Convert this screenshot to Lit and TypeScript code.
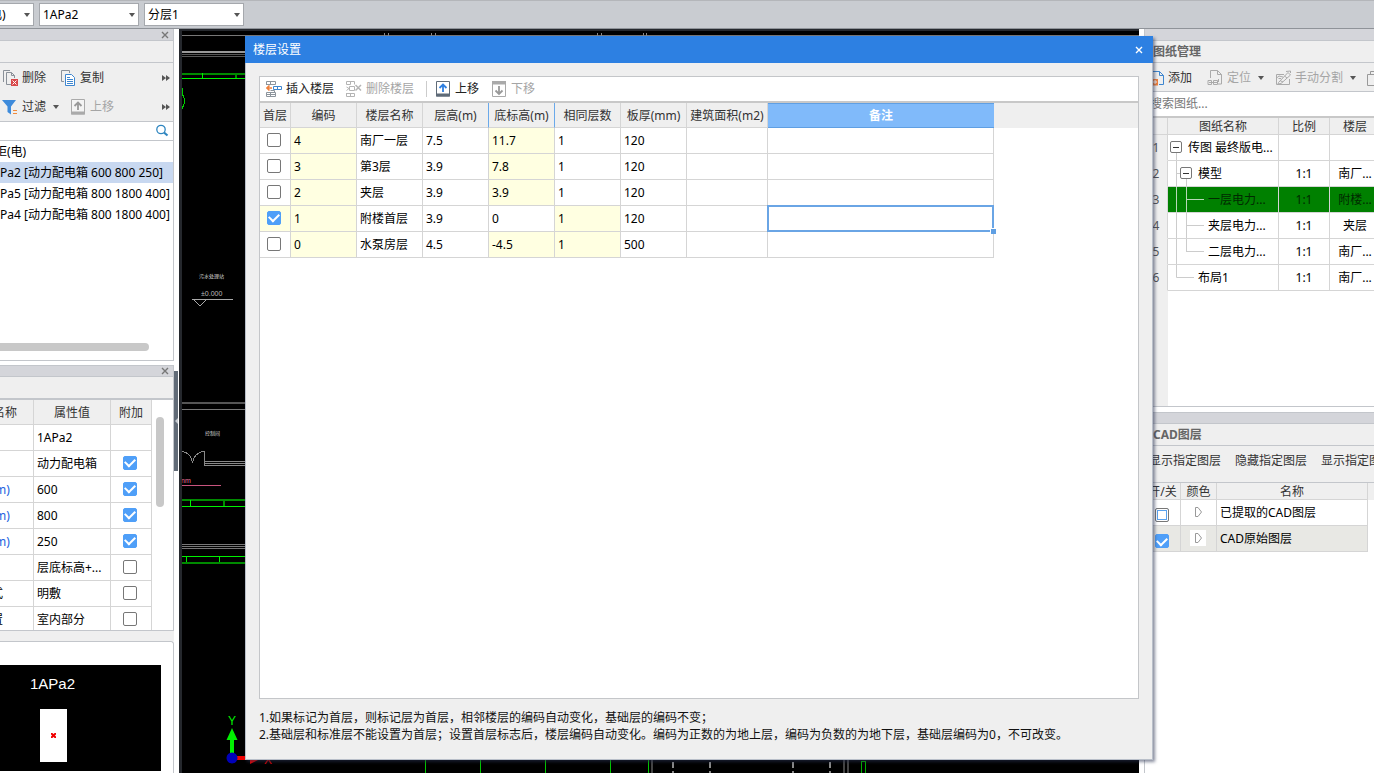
import { LitElement, html, svg, css, nothing } from "lit";
import { customElement, state } from "lit/decorators.js";

interface Floor {
  first: boolean;
  code: string;
  name: string;
  height: string;
  base: string;
  same: string;
  slab: string;
}

const icons = {
  close: html`<svg class="ico-s" viewBox="0 0 8 8"><path d="M1 1L7 7M7 1L1 7" stroke="currentColor" stroke-width="1.4" fill="none"/></svg>`,
  caret: html`<svg class="caret" viewBox="0 0 6 4"><path d="M0 0H6L3 4Z" fill="#555"/></svg>`,
  more: html`<svg class="ico-s" viewBox="0 0 8 8"><path d="M0 1L4 4L0 7ZM4 1L8 4L4 7Z" fill="#555"/></svg>`,
  del: html`<svg class="ico" viewBox="0 0 16 16" fill="none"><path d="M1.500 12V.5H8M10 14.500H4.500V2.500H9.500L12.500 5.500V8" stroke="#8a9199"/><path d="M9.500 2.500V5.500H12.500" stroke="#8a9199"/><rect x="9" y="9" width="7" height="7" fill="#d9484a"/><path d="M10.500 10.500L14.500 14.500M14.500 10.500L10.500 14.500" stroke="#fff"/></svg>`,
  copy: html`<svg class="ico" viewBox="0 0 16 16" fill="none"><path d="M4 11.500H1.500V.5H9.500V3" stroke="#8a9199"/><path d="M5.500 4.500H11.500L14.500 7.500V15.500H5.500Z" stroke="#3e86cf" fill="#fff"/><path d="M7 7.500H10M7 9.500H13M7 11.500H13M7 13.500H13" stroke="#3e86cf"/></svg>`,
  filter: html`<svg class="ico" viewBox="0 0 16 16"><path d="M0 1H14L9 7.500V15.500L5.500 13V7.500Z" fill="#3e8bdb"/><path d="M11 11.500H15M11 14.500H15" stroke="#f08a3c"/></svg>`,
  upGray: html`<svg class="ico" viewBox="0 0 16 16"><path d="M1.500 .500H14.500V15H1.500Z" fill="#f4f4f4" stroke="#aaa"/><path d="M1 12.500H15V15.500H1Z" fill="#aaa"/><path d="M8 11V4M4.500 7L8 3.500L11.500 7" fill="none" stroke="#999" stroke-width="1.8"/></svg>`,
  up: html`<svg class="ico" viewBox="0 0 16 16"><path d="M1.500 .500H14.500V15H1.500Z" fill="#fff" stroke="#5f6b78"/><path d="M1 12.500H15V15.500H1Z" fill="#5f6b78"/><path d="M8 11V4M4.500 7L8 3.500L11.500 7" fill="none" stroke="#2f7fe0" stroke-width="1.8"/></svg>`,
  down: html`<svg class="ico" viewBox="0 0 16 16"><path d="M1.500 .500H14.500V15.500H1.500Z" fill="#fff" stroke="#aaa"/><path d="M1 0H15V3.500H1Z" fill="#aaa"/><path d="M8 5V12.500M4.500 9.500L8 13L11.500 9.500" fill="none" stroke="#999" stroke-width="1.8"/></svg>`,
  insert: html`<svg class="ico" viewBox="0 0 16 16" fill="none"><path d="M.5 4V.5H9.500V3.500H.5M4.500 .500V3.500M.5 12V15.500H9.500V11.500H.5V13.500H9.500M4.500 11.500V15.500M4.500 9.500H8.500V11.500" stroke="#8c949c"/><path d="M7.500 5.500H15.500V8.500H7.500ZM11.500 5.500V8.500" stroke="#3e86cf"/><path d="M6 7H1M3.500 4.500L1 7L3.500 9.500" stroke="#f0803c" stroke-width="1.6"/></svg>`,
  remove: html`<svg class="ico" viewBox="0 0 16 16" fill="none" stroke="#b4b4b4"><path d="M.5 3.500V.5H8.500V3.500M4.500 .500V3.500H.5M.5 12V15.500H8.500V12.500H.5M4.500 12.500V15.500M.5 6L3 7.500L.5 9.500M3.500 5.500H8.500V9.500H3.500Z"/><path d="M9.500 4L15 9.500M15 4L9.500 9.500" stroke-width="1.5"/></svg>`,
  add: html`<svg class="ico" viewBox="0 0 16 16" fill="none"><path d="M4.500 7V1.500H11.500L15.500 5.500V14.500H11M11.500 1.500V5.500H15.500" stroke="#3e86cf"/><path d="M4 9H10V15.500H4Z" fill="#f0803c"/><path d="M7 10V14M5 12H9" stroke="#fff"/></svg>`,
  locate: html`<svg class="ico" viewBox="0 0 16 16" fill="none" stroke="#aaa"><path d="M3.500 8V.5H10.500L14.500 4.500V14H11M10.500 .500V4.500H14.500M11.500 9V12M1 10.500H4.500V14.500H1ZM6.500 10.500H10.500V14.500H6.500ZM2 12.500H10"/></svg>`,
  split: html`<svg class="ico" viewBox="0 0 16 16" fill="none" stroke="#aaa"><path d="M9 4.500H1.500V14.500H14.500V9M1 8.500L4 6L8 7M3.500 12.500L13 2.500L15.500 5L6 13.500L3 14ZM5 10.500L8 12M9.500 6L12 8M3.500 8.500H6M11 1.500L15.500 1V3"/></svg>`,
  sheets: html`<svg class="ico" viewBox="0 0 16 16" fill="none" stroke="#999"><path d="M.5 4.500H11.500V15.500H.5ZM3.500 4V1.500H15V12"/></svg>`,
  search: html`<svg class="ico" viewBox="0 0 16 16" fill="none" stroke="#2f86c0"><circle cx="7" cy="6.500" r="4.200" stroke-width="1.300"/><path d="M10 9.500L13.500 12.500" stroke-width="2.200"/></svg>`,
  tag: html`<svg class="tag" viewBox="0 0 16 16" fill="none"><path d="M5.500 3.500H8L11.500 8L8 12.500H5.500Z" stroke="#999"/></svg>`,
};

const shared = css`
  * { box-sizing: border-box; }
  button, input, select { font: inherit; color: inherit; margin: 0; }
  button { background: none; border: 0; padding: 0; display: flex; align-items: center; gap: 4px; white-space: nowrap; }
  button:disabled { color: #a5a5a5; }
  svg { display: block; flex: none; }
  .ico { width: 16px; height: 16px; }
  .ico-s { width: 8px; height: 8px; }
  .caret { width: 6px; height: 4px; }
  .tag { width: 16px; height: 16px; background: #fff; margin: 0 auto; }
  table { border-collapse: separate; border-spacing: 0; table-layout: fixed; }
  th, td { padding: 0 3px; height: 26px; border-right: 1px solid #d5d5d5; border-bottom: 1px solid #d5d5d5; overflow: hidden; white-space: nowrap; text-align: left; font-weight: 400; line-height: 16px; }
  th { background: #efefef; color: #333; text-align: center; padding: 2px 0 0; line-height: 14px; }
  .mid { text-align: center; }
  .tick { padding: 0 4px 2px 2px; }
  input[type="checkbox"] { appearance: none; width: 14px; height: 14px; margin: 0 auto; border: 1px solid #777; border-radius: 2px; background: #fff; display: grid; place-items: center; }
  input[type="checkbox"]:checked { background: #4f9ff8; border-color: #4f9ff8; }
  input[type="checkbox"]:checked::after { content: ""; width: 8px; height: 5px; border: solid #fff; border-width: 0 0 2px 2px; transform: translateY(-1px) rotate(-45deg); }
`;

@customElement("cad-canvas")
class CadCanvas extends LitElement {
  static styles = css`
    :host { display: block; background: #000; border: solid #25282d; border-width: 2px 0 0 3px; overflow: hidden; }
    svg { display: block; width: 100%; height: 100%; }
    .cad { font-family: "Noto Sans CJK SC", sans-serif; font-size: 5px; fill: #ddd; }
    .num { font-family: "Liberation Sans", sans-serif; font-size: 7px; fill: #bbb; }
    .axis { font-family: "Liberation Sans", sans-serif; font-size: 12px; }
    .pink { fill: #e8709a; }
  `;
  render() {
    const ticks = [384, 388, 431, 435, 597, 601, 643, 646];
    const green = [425, 480, 545, 610, 648];
    return html`<svg>
      <g transform="translate(-182 -31)" fill="none" shape-rendering="crispEdges">
        <path d="M182 35.500H1200" stroke="#777"/>
        <path d="M182 51.500H245" stroke="#999" stroke-width="2"/>
        <path d="M182 54.500H245M182 56.500H245" stroke="#555"/>
        <path d="M182 73.500H245M235.500 73V78" stroke="#008a00" stroke-width="2"/>
        <path d="M182 78.500H245M202.500 73V78" stroke="#00f000"/>
        ${ticks.map((x) => svg`<path d=${`M${x}.500 33V36`} stroke="#888"/>`)}
        <path d="M182 88V93L184 98V104L182 109" stroke="#00d000"/>
        <path d="M192 299.500H233M194 300L200 306L206 300" stroke="#aaa"/>
        <path d="M182 403H245" stroke="#555" stroke-width="2"/>
        <path d="M182 409.500H245" stroke="#777"/>
        <path d="M204.500 451V465M182 451Q192 454 192.500 463Q194 453 204 451M204 461.500H245M204 463.500H245M204 465.500H245" stroke="#888"/>
        <path d="M182 485.500H221" stroke="#c8547e"/>
        <path d="M182 500H245M223.500 500V506" stroke="#008a00" stroke-width="2"/>
        <path d="M182 506.500H245M190.500 500V506" stroke="#00f000"/>
        <path d="M182 544.500H245M182 546.500H245M182 548.500H245" stroke="#777"/>
        <path d="M182 556.500H245M186.500 556V563M219.500 556V563" stroke="#00f000"/>
        <path d="M182 563H245" stroke="#008a00" stroke-width="2"/>
        ${green.map((x) => svg`<path d=${`M${x}.500 758V900`} stroke="#00c800"/>`)}
        <path d="M652 758V900M844 758V900M848 758V900" stroke="#444" stroke-width="2"/>
        <path d="M673 762V900M710 762V900M793 762V900M830 762V900" stroke="#888" stroke-width="2" stroke-dasharray="6 3"/>
        <path d="M861.500 900V761.500H865.500V900" stroke="#00b000"/>
      </g>
      <g transform="translate(-182 -31)">
        <text class="cad" x="199" y="278">污水处理站</text>
        <text class="num" x="201" y="296">±0.000</text>
        <text class="cad" x="205" y="435">控制间</text>
        <text class="num pink" x="181" y="483">nm</text>
        <text class="axis" x="228" y="725" fill="#00f000">Y</text>
        <path d="M232 728L237.500 740H234V753H230V740H226.500Z" fill="#00f000"/>
        <path d="M237 756H250V752L262 758L250 764V760H237Z" fill="#f00000"/>
        <text class="axis" x="264" y="764" fill="#e00000">X</text>
        <circle cx="232" cy="758" r="5.500" fill="#0000b8"/>
      </g>
    </svg>`;
  }
}

@customElement("component-panel")
class ComponentPanel extends LitElement {
  static styles = [
    shared,
    css`
      :host { display: flex; flex-direction: column; background: #fff; overflow: hidden; }
      .panel { display: flex; flex-direction: column; background: #efefef; border: 1px solid #c3c6cb; border-left: 0; }
      .list-panel { height: 332px; flex: none; margin-bottom: 4px; border-top: 0; }
      .strip { height: 12px; flex: none; background: #d4d5da; border-bottom: 1px solid #c3c6cb; display: flex; justify-content: flex-end; align-items: center; padding-right: 4px; color: #777; }
      .blank { height: 22px; flex: none; border-bottom: 1px solid #c3c6cb; }
      .tools { height: 59px; flex: none; display: flex; flex-direction: column; justify-content: space-around; border-bottom: 1px solid #c3c6cb; color: #333; }
      .bar { display: flex; align-items: center; padding: 0 3px 0 2px; gap: 14px; }
      .bar .wide { gap: 7px; }
      .funnel { gap: 11px; }
      .wide span { display: flex; align-items: center; gap: 4px; }
      .bar .end { margin-left: auto; }
      .search { height: 19px; flex: none; background: #fff; display: flex; align-items: center; padding-right: 3px; border-bottom: 1px solid #c3c6cb; }
      .search input { border: 0; outline: 0; min-width: 0; flex: 1; height: 17px; padding: 0; }
      .tree { flex: 1; background: #fff; display: flex; flex-direction: column; white-space: nowrap; }
      .node { height: 21px; line-height: 21px; overflow: hidden; }
      .root { text-indent: -5px; }
      .on { background: #c8d8f0; }
      .hbar { height: 8px; width: 149px; border-radius: 0 4px 4px 0; background: #c8c8c8; margin-top: auto; margin-bottom: 9px; }
      .props { height: 266px; flex: none; }
      .props .strip { height: 11px; }
      .props .blank { height: 23px; border-bottom-width: 2px; }
      .grid { flex: 1; background: #fff; display: flex; overflow: hidden; min-height: 0; }
      .grid table { width: 152px; flex: none; }
      .grid th { height: 25px; }
      .c1 { width: 34px; } .c2 { width: 77px; } .c3 { width: 41px; }
      .unit { color: #1a5fe0; padding: 0; text-indent: -5px; }
      .lab { padding: 0; text-indent: -9px; }
      .grid .name { text-align: left; text-indent: -7px; }
      .vbar { width: 8px; height: 90px; border-radius: 4px; background: #c8c8c8; margin: 17px 0 0 4px; }
      .gap { height: 10px; flex: none; background: #efefef; }
      .preview { flex: 1; background: #fff; border: 1px solid #c3c6cb; border-width: 1px 1px 0 0; border-radius: 0 3px 0 0; padding: 23px 12px 0 0; }
      .sketch { background: #000; color: #fff; height: 106px; padding: 9px 0 0 30px; font: 15px/20px "Liberation Sans", sans-serif; }
      .box { width: 27px; height: 53px; background: #fff; margin: 15px 0 0 10px; display: grid; place-items: center; }
      .mark { width: 5px; height: 5px; }
    `,
  ];
  render() {
    const rows: [string, string, boolean | null, string][] = [
      ["", "1APa2", null, "lab"],
      ["", "动力配电箱", true, "lab"],
      ["m)", "600", true, "unit"],
      ["m)", "800", true, "unit"],
      ["m)", "250", true, "unit"],
      ["", "层底标高+...", false, "lab"],
      ["式", "明敷", false, "lab"],
      ["置", "室内部分", false, "lab"],
    ];
    return html`
      <section class="panel list-panel">
        <div class="strip">${icons.close}</div>
        <div class="blank"></div>
        <div class="tools">
          <div class="bar"><button>${icons.del}删除</button><button>${icons.copy}复制</button><button class="end" aria-label="更多">${icons.more}</button></div>
          <div class="bar funnel"><button class="wide"><span>${icons.filter}过滤</span>${icons.caret}</button><button disabled>${icons.upGray}上移</button><button class="end" aria-label="更多">${icons.more}</button></div>
        </div>
        <label class="search"><input type="text" aria-label="搜索构件" />${icons.search}</label>
        <div class="tree">
          <div class="node root">柜(电)</div>
          <div class="node on">Pa2 [动力配电箱 600 800 250]</div>
          <div class="node">Pa5 [动力配电箱 800 1800 400]</div>
          <div class="node">Pa4 [动力配电箱 800 1800 400]</div>
          <div class="hbar"></div>
        </div>
      </section>
      <section class="panel props">
        <div class="strip">${icons.close}</div>
        <div class="blank"></div>
        <div class="grid">
          <table>
            <thead><tr><th class="c1 name">名称</th><th class="c2">属性值</th><th class="c3">附加</th></tr></thead>
            <tbody>
              ${rows.map(([a, b, c, k]) => html`<tr><td class=${k}>${a}</td><td>${b}</td>
                <td class="tick">${c === null ? nothing : html`<input type="checkbox" aria-label=${b} .checked=${c} />`}</td></tr>`)}
            </tbody>
          </table>
          <div class="vbar"></div>
        </div>
      </section>
      <div class="gap"></div>
      <section class="preview">
        <div class="sketch">1APa2
          <div class="box"><svg class="mark" viewBox="0 0 5 5"><path d="M0 0L5 5M5 0L0 5" stroke="#f00000" stroke-width="2"/></svg></div>
        </div>
      </section>
    `;
  }
}

@customElement("drawing-panel")
class DrawingPanel extends LitElement {
  static styles = [
    shared,
    css`
      :host { display: flex; flex-direction: column; background: #fff; overflow: hidden; }
      .panel { display: flex; flex-direction: column; background: #efefef; border-left: 1px solid #c3c6cb; overflow: hidden; }
      .top { height: 378px; flex: none; border-bottom: 1px solid #c3c6cb; margin-bottom: 5px; }
      .bottom { flex: 1; border-top: 1px solid #c3c6cb; background: #fff; }
      .strip { height: 12px; flex: none; background: #d4d5da; border-bottom: 1px solid #c3c6cb; }
      .bottom .strip { height: 11px; }
      h2 { margin: 0; height: 22px; flex: none; padding-left: 8px; font-size: 12px; line-height: 21px; color: #666; background: #efefef; border-bottom: 1px solid #c3c6cb; }
      .bar { display: flex; flex: none; align-items: center; height: 29px; padding: 1px 0 0 3px; color: #333; border-bottom: 1px solid #c3c6cb; gap: 15px; background: #efefef; overflow: hidden; }
      .split { display: flex; gap: 11px; }
      .wide { gap: 7px; }
      .wide span { display: flex; align-items: center; gap: 4px; }
      .search { height: 26px; flex: none; background: #fff; border: 0; border-bottom: 2px solid #c8c8c8; padding: 0 0 2px 5px; outline: 0; border-radius: 0; }
      .search::placeholder { color: #777; opacity: 1; }
      .body { flex: 1; background: linear-gradient(to right, #efefef 23px, #fff 23px); }
      .body table { width: 236px; }
      .body th { height: 17px; }
      .body .num { height: 26px; color: #555; background: #efefef; border-bottom-color: #efefef; }
      .d0 { width: 23px; } .d1 { width: 111px; } .d2 { width: 51px; } .d3 { width: 51px; }
      .name { display: flex; align-items: center; height: 25px; }
      .body .cell { padding: 0; }
      .green td:not(.num) { background: #008000; color: #002a00; border-right-color: #d5d5d5; }
      .bottom .bar { height: 37px; gap: 14px; padding: 0 0 6px 4px; }
      .layers { background: linear-gradient(#efefef 17px, #fff 17px); flex: 1; }
      .layers table { width: 223px; }
      .layers th { height: 17px; }
      .l0 { width: 36px; } .l1 { width: 36px; } .l2 { width: 151px; }
      .grayrow td { background: #e8e8e4; }
      .low { padding: 5px 4px 0 2px; }
      .partial { box-shadow: inset 0 0 0 1px #fff, inset 0 0 0 2px #5aa2ee; }
    `,
  ];
  private guide(level: number, last: boolean, green: boolean) {
    const line = "#ccc";
    const box = (x: number) => svg`<rect x=${x + 0.5} y="6.500" width="11" height="11" rx="1.500" fill="#fff" stroke="#777"/><path d=${`M${x + 3} 12.500H${x + 9}`} stroke="#333"/>`;
    const w = level === 0 ? 20 : level === 2 ? 40 : 30;
    return html`<svg width=${w} height="25" viewBox="0 0 ${w} 25" fill="none">
      ${level === 0 ? svg`<path d="M8.500 18V25" stroke=${line}/>${box(2)}` : nothing}
      ${level === 1 ? svg`<path d="M8.500 0V25M8 12.500H12M18.500 18V25" stroke=${line}/>${box(12)}` : nothing}
      ${level === 2 ? svg`<path d=${`M8.500 0V25M18.500 0V${last ? 13 : 25}M18 12.500H36`} stroke=${green ? "#b8d8b8" : line}/>` : nothing}
      ${level === 3 ? svg`<path d="M8.500 0V12.500H26" stroke=${line}/>` : nothing}
    </svg>`;
  }
  render() {
    const rows: [string, number, string, string, boolean][] = [
      ["传图 最终版电...", 0, "", "", false],
      ["模型", 1, "1:1", "南厂...", false],
      ["一层电力...", 2, "1:1", "附楼...", false],
      ["夹层电力...", 2, "1:1", "夹层", false],
      ["二层电力...", 2, "1:1", "南厂...", true],
      ["布局1", 3, "1:1", "南厂...", false],
    ];
    return html`
      <section class="panel top">
        <div class="strip"></div>
        <h2>图纸管理</h2>
        <div class="bar">
          <button>${icons.add}添加</button>
          <div class="split">
            <button class="wide" disabled><span>${icons.locate}定位</span>${icons.caret}</button>
            <button class="wide" disabled><span>${icons.split}手动分割</span>${icons.caret}</button>
            <button disabled aria-label="图纸">${icons.sheets}</button>
          </div>
        </div>
        <input class="search" type="text" placeholder="搜索图纸..." aria-label="搜索图纸" />
        <div class="body">
          <table>
            <thead><tr><th class="d0"></th><th class="d1">图纸名称</th><th class="d2">比例</th><th class="d3">楼层</th></tr></thead>
            <tbody>
              ${rows.map(([n, l, s, f, last], i) => html`<tr class=${i === 2 ? "green" : ""}>
                <td class="num mid">${i + 1}</td>
                <td class="cell"><div class="name">${this.guide(l, last, i === 2)}${n}</div></td>
                <td class="mid">${s}</td><td class="mid cell">${f}</td></tr>`)}
            </tbody>
          </table>
        </div>
      </section>
      <section class="panel bottom">
        <div class="strip"></div>
        <h2>CAD图层</h2>
        <div class="bar"><button>显示指定图层</button><button>隐藏指定图层</button><button>显示指定图层</button></div>
        <div class="layers">
          <table>
            <thead><tr><th class="l0">开/关</th><th class="l1">颜色</th><th class="l2">名称</th></tr></thead>
            <tbody>
              <tr><td class="low"><input class="partial" type="checkbox" aria-label="已提取的CAD图层" /></td><td class="tick">${icons.tag}</td><td>已提取的CAD图层</td></tr>
              <tr class="grayrow"><td class="low"><input type="checkbox" aria-label="CAD原始图层" checked /></td><td class="tick">${icons.tag}</td><td>CAD原始图层</td></tr>
            </tbody>
          </table>
        </div>
      </section>
    `;
  }
}

@customElement("floor-dialog")
class FloorDialog extends LitElement {
  static styles = [
    shared,
    css`
      :host { display: flex; flex-direction: column; background: #efefef; border: 1px solid #b9bfc9; border-top: 0; box-shadow: 2px 2px 3px rgba(40, 50, 80, 0.55); }
      header { height: 27px; flex: none; margin: 0 -1px; padding: 0 10px 0 8px; background: #2d80e2; color: #fff; display: flex; justify-content: space-between; align-items: center; }
      .frame { flex: 1; min-height: 0; margin: 13px 13px 0; border: 1px solid #c4c6c9; background: #fff; }
      .bar { height: 26px; border-bottom: 2px solid #c8c8c8; display: flex; align-items: center; padding-left: 6px; gap: 12px; color: #222; }
      .pair { display: flex; gap: 12px; }
      .ordering { border-left: 1px solid #ccc; height: 16px; padding-left: 8px; align-items: center; }
      .head { background: linear-gradient(#efefef 25px, #fff 25px); }
      table { width: 734px; }
      th { height: 25px; }
      .w31 { width: 31px; } .w66 { width: 66px; } .w81 { width: 81px; } .w226 { width: 226px; }
      .left-of { border-right-color: #6aa9ea; }
      .active { background: #80bafa; color: #fff; font-weight: 700; border: solid #5f9fe3; border-width: 1px 0; padding-top: 1px; }
      .calc { background: #ffffe1; }
      .edit { position: relative; overflow: visible; }
      .edit::before { content: ""; position: absolute; inset: -1px; border: 2px solid #6aa5e5; }
      .edit::after { content: ""; position: absolute; right: -3px; bottom: -3px; width: 5px; height: 5px; background: #5f9fe3; border: solid #fff; border-width: 1px 0 0 1px; }
      footer { flex: none; padding: 10px 13px 16px; line-height: 17px; color: #111; }
      p { margin: 0; }
    `,
  ];
  @state() private floors: Floor[] = [
    { first: false, code: "4", name: "南厂一层", height: "7.5", base: "11.7", same: "1", slab: "120" },
    { first: false, code: "3", name: "第3层", height: "3.9", base: "7.8", same: "1", slab: "120" },
    { first: false, code: "2", name: "夹层", height: "3.9", base: "3.9", same: "1", slab: "120" },
    { first: true, code: "1", name: "附楼首层", height: "3.9", base: "0", same: "1", slab: "120" },
    { first: false, code: "0", name: "水泵房层", height: "4.5", base: "-4.5", same: "1", slab: "500" },
  ];
  render() {
    return html`
      <header><span>楼层设置</span><button aria-label="关闭">${icons.close}</button></header>
      <div class="frame">
        <div class="bar">
          <div class="pair"><button>${icons.insert}插入楼层</button><button disabled>${icons.remove}删除楼层</button></div>
          <div class="pair ordering"><button>${icons.up}上移</button><button disabled>${icons.down}下移</button></div>
        </div>
        <div class="head">
          <table>
            <thead><tr>
              <th class="w31">首层</th><th class="w66">编码</th><th class="w66">楼层名称</th><th class="w66 left-of">层高(m)</th>
              <th class="w66 left-of">底标高(m)</th><th class="w66">相同层数</th><th class="w66">板厚(mm)</th><th class="w81">建筑面积(m2)</th><th class="w226 active">备注</th>
            </tr></thead>
            <tbody>
              ${this.floors.map((f, i) => html`<tr>
                <td class="tick ${f.first ? "calc" : ""}"><input type="checkbox" aria-label=${f.name} .checked=${f.first} /></td>
                <td class="calc">${f.code}</td>
                <td>${f.name}</td>
                <td>${f.height}</td>
                <td class=${f.first ? "" : "calc"}>${f.base}</td>
                <td class=${i >= 3 ? "calc" : ""}>${f.same}</td>
                <td>${f.slab}</td>
                <td></td>
                <td class=${f.first ? "edit" : ""}></td>
              </tr>`)}
            </tbody>
          </table>
        </div>
      </div>
      <footer>
        <p>1.如果标记为首层，则标记层为首层，相邻楼层的编码自动变化，基础层的编码不变；</p>
        <p>2.基础层和标准层不能设置为首层；设置首层标志后，楼层编码自动变化。编码为正数的为地上层，编码为负数的为地下层，基础层编码为0，不可改变。</p>
      </footer>
    `;
  }
}

@customElement("app-root")
class AppRoot extends LitElement {
  static styles = [
    shared,
    css`
      :host { display: flex; flex-direction: column; height: 100vh; position: relative; overflow: hidden; background: #fff; color: #000; font: 12px/16px "Noto Sans", "Noto Sans CJK SC", sans-serif; }
      .topbar { flex: none; height: 29px; padding-top: 2px; background: #c9ccd1; border-top: 1px solid #b4b6ba; border-bottom: 1px solid #8f9399; display: flex; align-items: flex-start; gap: 5px; overflow: hidden; }
      .combo { display: grid; align-items: center; width: 100px; flex: none; }
      .combo select, .combo svg { grid-area: 1 / 1; }
      .combo svg { justify-self: end; margin-right: 4px; }
      .combo select { appearance: none; width: 100%; height: 23px; border: 1px solid #a5a8ad; border-radius: 0; background: #fff; padding: 0 12px 0 3px; }
      .cut { width: 48px; margin-left: -14px; }
      .main { flex: 1; min-height: 0; display: flex; }
      component-panel { width: 174px; flex: none; }
      .splitter { width: 5px; flex: none; background: #fff; padding-top: 342px; }
      .grip { width: 4px; height: 100px; background: #616b77; justify-content: flex-end; }
      .grip svg { width: 3px; height: 6px; }
      cad-canvas { flex: 1; min-width: 0; }
      drawing-panel { width: 230px; flex: none; margin-left: 5px; }
      floor-dialog { position: absolute; inset: 36px 221px 13px 245px; }
    `,
  ];
  private combo(text: string, cls = "") {
    return html`<label class="combo ${cls}"><select aria-label=${text}><option>${text}</option></select>${icons.caret}</label>`;
  }
  render() {
    return html`
      <div class="topbar">${this.combo("电)", "cut")}${this.combo("1APa2")}${this.combo("分层1")}</div>
      <div class="main">
        <component-panel></component-panel>
        <div class="splitter"><button class="grip" aria-label="折叠"><svg viewBox="0 0 3 6"><path d="M3 0V6L0 3Z" fill="#c5cad0"/></svg></button></div>
        <cad-canvas></cad-canvas>
        <drawing-panel></drawing-panel>
      </div>
      <floor-dialog role="dialog" aria-label="楼层设置"></floor-dialog>
    `;
  }
}
